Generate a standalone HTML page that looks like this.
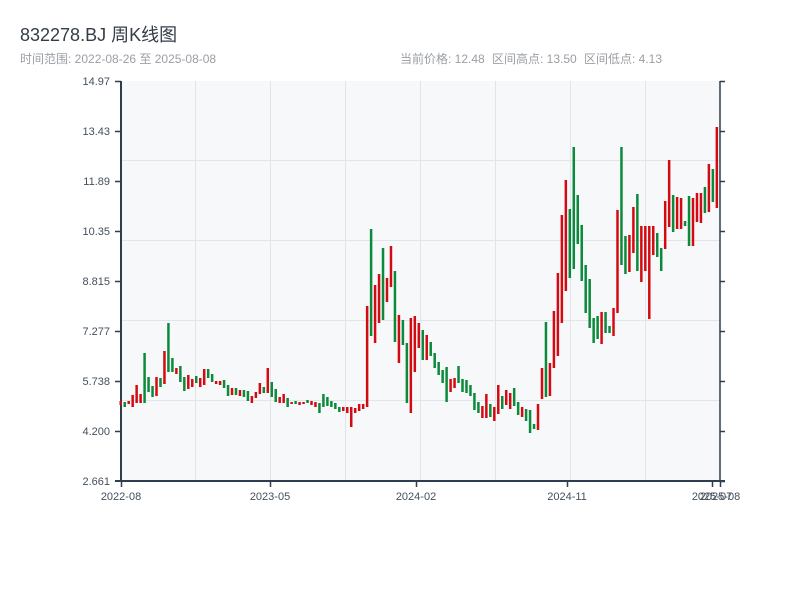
<!DOCTYPE html>
<html><head><meta charset="utf-8"><style>
body{margin:0;width:800px;height:600px;background:#fff;overflow:hidden;font-family:"Liberation Sans","Noto Sans CJK SC",sans-serif}
</style></head><body>
<svg width="800" height="600" xmlns="http://www.w3.org/2000/svg" style="position:absolute;left:0;top:0">
<text x="20" y="41" font-size="18" fill="#333c48" font-family="Liberation Sans, Noto Sans CJK SC, sans-serif">832278.BJ 周K线图</text>
<text x="20" y="63" font-size="12" fill="#9a9ea4" font-family="Liberation Sans, Noto Sans CJK SC, sans-serif">时间范围: 2022-08-26 至 2025-08-08</text>
<g font-size="12" fill="#9a9ea4" font-family="Liberation Sans, Noto Sans CJK SC, sans-serif">
<text x="400" y="63">当前价格: 12.48</text>
<text x="492" y="63">区间高点: 13.50</text>
<text x="584" y="63">区间低点: 4.13</text>
</g>
<rect x="121" y="81" width="599" height="400" fill="#f6f8fa"/>
<g stroke="#e1e4ea" stroke-width="1">
<path d="M121 160.5H720M121 240.5H720M121 320.5H720M121 400.5H720"/>
<path d="M195.5 81V481M270.5 81V481M345.5 81V481M420.5 81V481M495.5 81V481M570.5 81V481M645.5 81V481"/>
</g>
<g font-size="11" fill="#44505c" text-anchor="end" font-family="Liberation Sans, sans-serif">
<text x="110" y="85">14.97</text><text x="110" y="135">13.43</text><text x="110" y="185">11.89</text><text x="110" y="235">10.35</text><text x="110" y="285">8.815</text><text x="110" y="335">7.277</text><text x="110" y="385">5.738</text><text x="110" y="435">4.200</text><text x="110" y="485">2.661</text>
</g>
<g stroke="#2c3e50" stroke-width="2" fill="none">
<path d="M121 81V482M115 481H725"/>
<path d="M720 81V481" stroke-width="1.5"/>
<path d="M115 81.5h6M115 131.5h6M115 181.5h6M115 231.5h6M115 281.5h6M115 331.5h6M115 381.5h6M115 431.5h6" stroke-width="1.5"/>
<path d="M720 81.5h5M720 131.5h5M720 181.5h5M720 231.5h5M720 281.5h5M720 331.5h5M720 381.5h5M720 431.5h5M720 481.5h5" stroke-width="1.5"/>
<path d="M121.5 481v6M270.5 481v6M416.5 481v6M567.5 481v6M712.5 481v6M720.5 481v6" stroke-width="1.5"/>
</g>
<g font-size="11" fill="#44505c" text-anchor="middle" font-family="Liberation Sans, sans-serif">
<text x="121" y="500">2022-08</text><text x="270" y="500">2023-05</text><text x="416" y="500">2024-02</text><text x="567" y="500">2024-11</text><text x="712" y="500">2025-07</text><text x="720" y="500">2025-08</text>
</g>
<g transform="translate(119.5,0) scale(0.9935,1)">
<g fill="#0a8a3a">
<rect x="4" y="402" width="2.5" height="5"/><rect x="24" y="353" width="2.5" height="50"/><rect x="28" y="377" width="2.5" height="15"/><rect x="32" y="386" width="2.5" height="11"/><rect x="40" y="378" width="2.5" height="9"/><rect x="48" y="323" width="2.5" height="49"/><rect x="52" y="358" width="2.5" height="14"/><rect x="60" y="366" width="2.5" height="16"/><rect x="64" y="377" width="2.5" height="14"/><rect x="76" y="376" width="2.5" height="7"/><rect x="88" y="369" width="2.5" height="9"/><rect x="92" y="374" width="2.5" height="8"/><rect x="104" y="380" width="2.5" height="8"/><rect x="108" y="385" width="2.5" height="11"/><rect x="116" y="388" width="2.5" height="7"/><rect x="124" y="390" width="2.5" height="7"/><rect x="128" y="391" width="2.5" height="10"/><rect x="144" y="387" width="2.5" height="6"/><rect x="152" y="382" width="2.5" height="15"/><rect x="156" y="389" width="2.5" height="13"/><rect x="168" y="398" width="2.5" height="9"/><rect x="176" y="401" width="2.5" height="3"/><rect x="188" y="400" width="2.5" height="3"/><rect x="200" y="403" width="2.5" height="10"/><rect x="204" y="394" width="2.5" height="13"/><rect x="208" y="397" width="2.5" height="9"/><rect x="212" y="401" width="2.5" height="6"/><rect x="216" y="403" width="2.5" height="6"/><rect x="220" y="407" width="2.5" height="5"/>
<rect x="252" y="229" width="2.5" height="107"/><rect x="264" y="248" width="2.5" height="72"/><rect x="276" y="271" width="2.5" height="71"/><rect x="284" y="320" width="2.5" height="25"/><rect x="288" y="343" width="2.5" height="60"/><rect x="304" y="330" width="2.5" height="30"/><rect x="312" y="342" width="2.5" height="14"/><rect x="316" y="353" width="2.5" height="15"/><rect x="320" y="362" width="2.5" height="13"/><rect x="324" y="370" width="2.5" height="13"/><rect x="328" y="367" width="2.5" height="35"/><rect x="340" y="366" width="2.5" height="17"/><rect x="344" y="379" width="2.5" height="13"/><rect x="348" y="380" width="2.5" height="13"/><rect x="352" y="385" width="2.5" height="11"/><rect x="356" y="393" width="2.5" height="17"/><rect x="360" y="402" width="2.5" height="11"/><rect x="372" y="404" width="2.5" height="13"/><rect x="384" y="396" width="2.5" height="13"/><rect x="396" y="388" width="2.5" height="18"/><rect x="400" y="402" width="2.5" height="13"/><rect x="408" y="409" width="2.5" height="12"/><rect x="412" y="410" width="2.5" height="23"/><rect x="416" y="424" width="2.5" height="5"/>
<rect x="428" y="322" width="2.5" height="75"/><rect x="452" y="209" width="2.5" height="69"/><rect x="456" y="147" width="2.5" height="122"/><rect x="460" y="195" width="2.5" height="49"/><rect x="464" y="225" width="2.5" height="56"/><rect x="468" y="265" width="2.5" height="48"/><rect x="472" y="279" width="2.5" height="49"/><rect x="476" y="318" width="2.5" height="25"/><rect x="480" y="316" width="2.5" height="23"/><rect x="488" y="312" width="2.5" height="21"/><rect x="492" y="326" width="2.5" height="7"/><rect x="504" y="147" width="2.5" height="118"/><rect x="508" y="236" width="2.5" height="38"/><rect x="520" y="194" width="2.5" height="77"/><rect x="540" y="233" width="2.5" height="24"/><rect x="544" y="248" width="2.5" height="23"/><rect x="556" y="195" width="2.5" height="37"/><rect x="568" y="221" width="2.5" height="5"/><rect x="572" y="196" width="2.5" height="50"/><rect x="588" y="187" width="2.5" height="26"/><rect x="596" y="169" width="2.5" height="33"/>
</g>
<g fill="#d40a12">
<rect x="0" y="401" width="2.5" height="4"/><rect x="8" y="401" width="2.5" height="3"/><rect x="12" y="395" width="2.5" height="12"/><rect x="16" y="385" width="2.5" height="18"/><rect x="20" y="394" width="2.5" height="9"/><rect x="36" y="377" width="2.5" height="19"/><rect x="44" y="351" width="2.5" height="33"/><rect x="56" y="368" width="2.5" height="6"/><rect x="68" y="375" width="2.5" height="14"/><rect x="72" y="379" width="2.5" height="8"/><rect x="80" y="378" width="2.5" height="9"/><rect x="84" y="369" width="2.5" height="16"/><rect x="96" y="381" width="2.5" height="3"/><rect x="100" y="381" width="2.5" height="4"/><rect x="112" y="388" width="2.5" height="7"/><rect x="120" y="390" width="2.5" height="6"/><rect x="132" y="396" width="2.5" height="7"/><rect x="136" y="392" width="2.5" height="6"/><rect x="140" y="383" width="2.5" height="11"/><rect x="148" y="368" width="2.5" height="25"/><rect x="160" y="397" width="2.5" height="6"/><rect x="164" y="394" width="2.5" height="9"/><rect x="172" y="402" width="2.5" height="2"/><rect x="180" y="402" width="2.5" height="3"/><rect x="184" y="402" width="2.5" height="2"/><rect x="192" y="401" width="2.5" height="4"/><rect x="196" y="402" width="2.5" height="5"/><rect x="224" y="407" width="2.5" height="4"/><rect x="228" y="407" width="2.5" height="6"/><rect x="232" y="407" width="2.5" height="20"/><rect x="236" y="408" width="2.5" height="5"/><rect x="240" y="404" width="2.5" height="7"/><rect x="244" y="404" width="2.5" height="5"/><rect x="248" y="306" width="2.5" height="101"/>
<rect x="256" y="285" width="2.5" height="58"/><rect x="260" y="274" width="2.5" height="49"/><rect x="268" y="278" width="2.5" height="24"/><rect x="272" y="246" width="2.5" height="41"/><rect x="280" y="315" width="2.5" height="48"/><rect x="292" y="318" width="2.5" height="95"/><rect x="296" y="316" width="2.5" height="56"/><rect x="300" y="323" width="2.5" height="25"/><rect x="308" y="335" width="2.5" height="25"/><rect x="332" y="379" width="2.5" height="13"/><rect x="336" y="378" width="2.5" height="10"/><rect x="364" y="406" width="2.5" height="12"/><rect x="368" y="394" width="2.5" height="24"/><rect x="376" y="407" width="2.5" height="14"/><rect x="380" y="385" width="2.5" height="29"/><rect x="388" y="390" width="2.5" height="15"/><rect x="392" y="393" width="2.5" height="16"/><rect x="404" y="407" width="2.5" height="10"/><rect x="420" y="404" width="2.5" height="26"/><rect x="424" y="368" width="2.5" height="31"/><rect x="432" y="363" width="2.5" height="33"/><rect x="436" y="311" width="2.5" height="57"/><rect x="440" y="273" width="2.5" height="83"/><rect x="444" y="215" width="2.5" height="108"/><rect x="448" y="180" width="2.5" height="111"/>
<rect x="484" y="312" width="2.5" height="32"/><rect x="496" y="308" width="2.5" height="28"/><rect x="500" y="210" width="2.5" height="103"/><rect x="512" y="235" width="2.5" height="37"/><rect x="516" y="207" width="2.5" height="46"/><rect x="524" y="226" width="2.5" height="56"/><rect x="528" y="226" width="2.5" height="45"/><rect x="532" y="226" width="2.5" height="93"/><rect x="536" y="226" width="2.5" height="29"/><rect x="548" y="201" width="2.5" height="48"/><rect x="552" y="160" width="2.5" height="67"/><rect x="560" y="197" width="2.5" height="32"/><rect x="564" y="198" width="2.5" height="31"/><rect x="576" y="198" width="2.5" height="48"/><rect x="580" y="193" width="2.5" height="29"/><rect x="584" y="193" width="2.5" height="30"/><rect x="592" y="164" width="2.5" height="48"/><rect x="600" y="127" width="2.5" height="81"/>
</g>
</g>
</svg>
</body></html>
